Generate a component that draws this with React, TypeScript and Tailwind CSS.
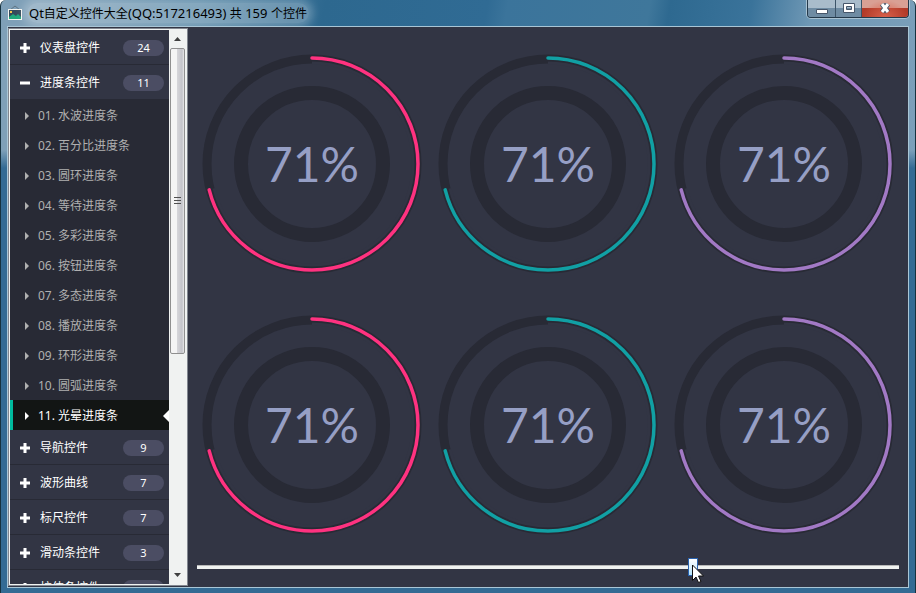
import { useState } from "react";

type Group = { name: string; count: number; items?: string[] };

const groups: Group[] = [
  { name: "仪表盘控件", count: 24 },
  {
    name: "进度条控件",
    count: 11,
    items: [
      "01. 水波进度条",
      "02. 百分比进度条",
      "03. 圆环进度条",
      "04. 等待进度条",
      "05. 多彩进度条",
      "06. 按钮进度条",
      "07. 多态进度条",
      "08. 播放进度条",
      "09. 环形进度条",
      "10. 圆弧进度条",
      "11. 光晕进度条",
    ],
  },
  { name: "导航控件", count: 9 },
  { name: "波形曲线", count: 7 },
  { name: "标尺控件", count: 7 },
  { name: "滑动条控件", count: 3 },
  { name: "拉伸条控件", count: 5 },
];

const ringColors = ["#ff3280", "#11a0a4", "#a279c5", "#ff3280", "#11a0a4", "#a279c5"];

function Ring({ color, value }: { color: string; value: number }) {
  const c = 2 * Math.PI * 106;
  return (
    <div className="grid min-h-0 place-items-center">
      <svg viewBox="0 0 230 230" className="col-start-1 row-start-1 size-[230px]" fill="none">
        <circle cx="115" cy="115" r="105" stroke="#282a35" strokeWidth="9" />
        <circle cx="115" cy="115" r="71" stroke="#282a35" strokeWidth="14" />
        <circle
          cx="115"
          cy="115"
          r="101"
          stroke="#323544"
          strokeWidth="3"
          strokeDasharray={`${2 * Math.PI * 101 * (value / 100)} 1000`}
          transform="rotate(-90 115 115)"
        />
        <circle
          cx="115"
          cy="115"
          r="106"
          stroke={color}
          strokeWidth="3.5"
          strokeLinecap="round"
          strokeDasharray={`${c * (value / 100)} ${c}`}
          transform="rotate(-90 115 115)"
        />
      </svg>
      <span className="col-start-1 row-start-1 font-['Lato',sans-serif] text-[48px] leading-[60px] text-[#969fc5]">
        {value}%
      </span>
    </div>
  );
}

function WindowIcon() {
  return (
    <svg viewBox="0 0 16 16" className="size-4" aria-hidden="true">
      <path d="M3 5 L8 1 L13 5" fill="none" stroke="#5f7482" strokeWidth="1" />
      <rect x="1" y="4" width="14" height="11" fill="#f4f4f0" />
      <rect x="2" y="5" width="12" height="9" fill="#354a5c" />
      <path d="M2 14 V12 L6 9 L9 11 L11 9 L14 12 V14 Z" fill="#1fa97c" />
      <rect x="3" y="6" width="2" height="2" fill="#f2c14a" />
    </svg>
  );
}

export default function App() {
  const [value, setValue] = useState(71);
  const [selected, setSelected] = useState("11. 光晕进度条");

  return (
    <div className="relative flex h-screen flex-col overflow-hidden rounded-t-md border-x border-[#16323f] bg-[linear-gradient(180deg,transparent_150px,#346b94_168px),linear-gradient(100deg,#7fa0b8_0px,#7fa0b8_40px,#5b8aa8_200px,#2d688f_320px,#306b94_480px,#3b749b_500px,#3f779b_640px,#2e6990_660px,#3a739a_740px,#6f98b5_800px,#84a4bd_100%)] px-1.5 pb-[5px] font-['Noto_Sans','Noto_Sans_CJK_SC',sans-serif] text-xs">
      <header className="flex h-[26px] shrink-0 items-center">
        <WindowIcon />
        <h1 className="ml-1 rounded-full bg-white/25 px-0.5 text-[13px] leading-5 whitespace-nowrap text-black shadow-[0_0_8px_4px_rgba(255,255,255,0.25)]">
          Qt<span className="text-xs">自定义控件大全</span>(QQ:517216493) <span className="text-xs">共</span> 159{" "}
          <span className="text-xs">个控件</span>
        </h1>
        <div className="ml-auto flex h-[18px] self-start overflow-hidden rounded-b border border-t-0 border-[#24394a] shadow-[0_0_0_1px_#a9c2d2]">
          <button aria-label="Minimize" className="grid w-7 place-items-center border-r border-[#3c5468] bg-linear-to-b from-[#a9bccb] from-45% to-[#6f8ca3] to-50%">
            <svg viewBox="0 0 12 12" className="size-3">
              <path d="M.5 6.500h11v4H.5z" fill="#fff" stroke="#46566a" />
            </svg>
          </button>
          <button aria-label="Maximize" className="grid w-[26px] place-items-center border-r border-[#3c5468] bg-linear-to-b from-[#a9bccb] from-45% to-[#6f8ca3] to-50%">
            <svg viewBox="0 0 12 12" className="size-3">
              <path d="M.5 .5h11v9H.5zM3.500 3.500v3h5v-3z" fill="#fff" fillRule="evenodd" stroke="#46566a" />
            </svg>
          </button>
          <button aria-label="Close" className="grid w-[46px] place-items-center bg-[radial-gradient(ellipse_at_bottom,#d8604a,transparent_70%),linear-gradient(180deg,#d9a094_45%,#b23a28_50%)]">
            <svg viewBox="0 0 14 12" className="h-3 w-3.5">
              <path d="M4 1 L10 9 M10 1 L4 9" stroke="#46566a" strokeWidth="5" />
              <path d="M4 1 L10 9 M10 1 L4 9" stroke="#fff" strokeWidth="3" />
            </svg>
          </button>
        </div>
      </header>

      <div className="flex min-h-0 flex-1 border border-[#a9c6d6] bg-[#323544] py-px">
        <aside className="flex w-[180px] shrink-0 border border-[#828790] bg-[#f0f2f1] p-px">
          <nav className="min-h-0 flex-1 overflow-hidden bg-[#323544]">
            {groups.map((g) => (
              <div key={g.name}>
                <button className="flex h-[35px] w-full items-center border-b border-[#282a35] pt-0.5 pr-[5px] pl-2.5 text-left text-white">
                  <svg viewBox="0 0 10 10" className="size-2.5 shrink-0">
                    <path d={g.items ? "M0 5H10" : "M0 5H10M5 0V10"} stroke="#fff" strokeWidth="3" />
                  </svg>
                  <span className="ml-2.5 flex-1">{g.name}</span>
                  <span className="w-[41px] rounded-full bg-[#4b4d63] text-center text-[11px] leading-4">{g.count}</span>
                </button>
                {g.items?.map((item) => {
                  const on = item === selected;
                  return (
                    <button
                      key={item}
                      onClick={() => setSelected(item)}
                      className={`flex h-[30px] w-full items-center border-l-[3px] pt-0.5 text-left ${
                        on ? "border-[#00bb9e] bg-[#121514] text-white" : "border-[#282a35] bg-[#282a35] text-[#b0b0b0]"
                      }`}
                    >
                      <svg viewBox="0 0 4 8" className="ml-3 h-2 w-1" fill="currentColor">
                        <path d="M0 0 L4 4 L0 8Z" />
                      </svg>
                      <span className="ml-[9px] flex-1">{item}</span>
                      {on && (
                        <svg viewBox="0 0 6 12" className="h-3 w-1.5" fill="#fff">
                          <path d="M6 0 L0 6 L6 12Z" />
                        </svg>
                      )}
                    </button>
                  );
                })}
              </div>
            ))}
          </nav>
          <div className="flex w-[17px] shrink-0 flex-col items-center bg-[#f0f2f1]">
            <button aria-label="Scroll up" className="grid h-[18px] w-full shrink-0 place-items-center">
              <svg viewBox="0 0 7 4" className="h-1 w-[7px]" fill="#404040">
                <path d="M0 4 L3.500 0 L7 4Z" />
              </svg>
            </button>
            <div className="grid h-[306px] w-[15px] place-items-center rounded-xs border border-[#8f8f8f] bg-[linear-gradient(90deg,#f4f4f4_45%,#d4d4d8_50%,#c4c4ca_85%,#e8e8e8)]">
              <svg viewBox="0 0 7 8" className="h-2 w-[7px]">
                <path d="M0 .5H7M0 3.500H7M0 6.500H7" stroke="#505050" />
              </svg>
            </div>
            <button aria-label="Scroll down" className="mt-auto grid h-[18px] w-full shrink-0 place-items-center">
              <svg viewBox="0 0 7 4" className="h-1 w-[7px]" fill="#404040">
                <path d="M0 0 L3.500 4 L7 0Z" />
              </svg>
            </button>
          </div>
        </aside>

        <main className="flex min-w-0 flex-1 flex-col gap-1.5 px-[9px] pt-2 pb-[10px]">
          <div className="grid min-h-0 flex-1 grid-cols-3 grid-rows-2 gap-1.5">
            {ringColors.map((color, i) => (
              <Ring key={i} color={color} value={value} />
            ))}
          </div>
          <div className="relative h-[18px] shrink-0">
            <input
              type="range"
              aria-label="进度"
              min={0}
              max={100}
              value={value}
              onChange={(e) => setValue(Number(e.target.value))}
              className="block h-[18px] w-full appearance-none bg-transparent [&::-webkit-slider-runnable-track]:h-1 [&::-webkit-slider-runnable-track]:border-t [&::-webkit-slider-runnable-track]:border-[#b8b8b8] [&::-webkit-slider-runnable-track]:bg-[#f0f2f1] [&::-webkit-slider-thumb]:-mt-2 [&::-webkit-slider-thumb]:h-[18px] [&::-webkit-slider-thumb]:w-2.5 [&::-webkit-slider-thumb]:appearance-none [&::-webkit-slider-thumb]:border [&::-webkit-slider-thumb]:border-[#2a63b0] [&::-webkit-slider-thumb]:bg-linear-to-b [&::-webkit-slider-thumb]:from-white [&::-webkit-slider-thumb]:to-[#b4e2fa]"
            />
            <svg
              viewBox="0 0 13 20"
              className="pointer-events-none absolute top-1.5 h-5 w-[13px]"
              style={{ left: `${value - 0.5}%` }}
            >
              <path d="M.5 1 V16.500 L4 13 L6.500 18.500 L9 17.500 L6.500 12 H11.500Z" fill="#fff" stroke="#111" />
            </svg>
          </div>
        </main>
      </div>
    </div>
  );
}
